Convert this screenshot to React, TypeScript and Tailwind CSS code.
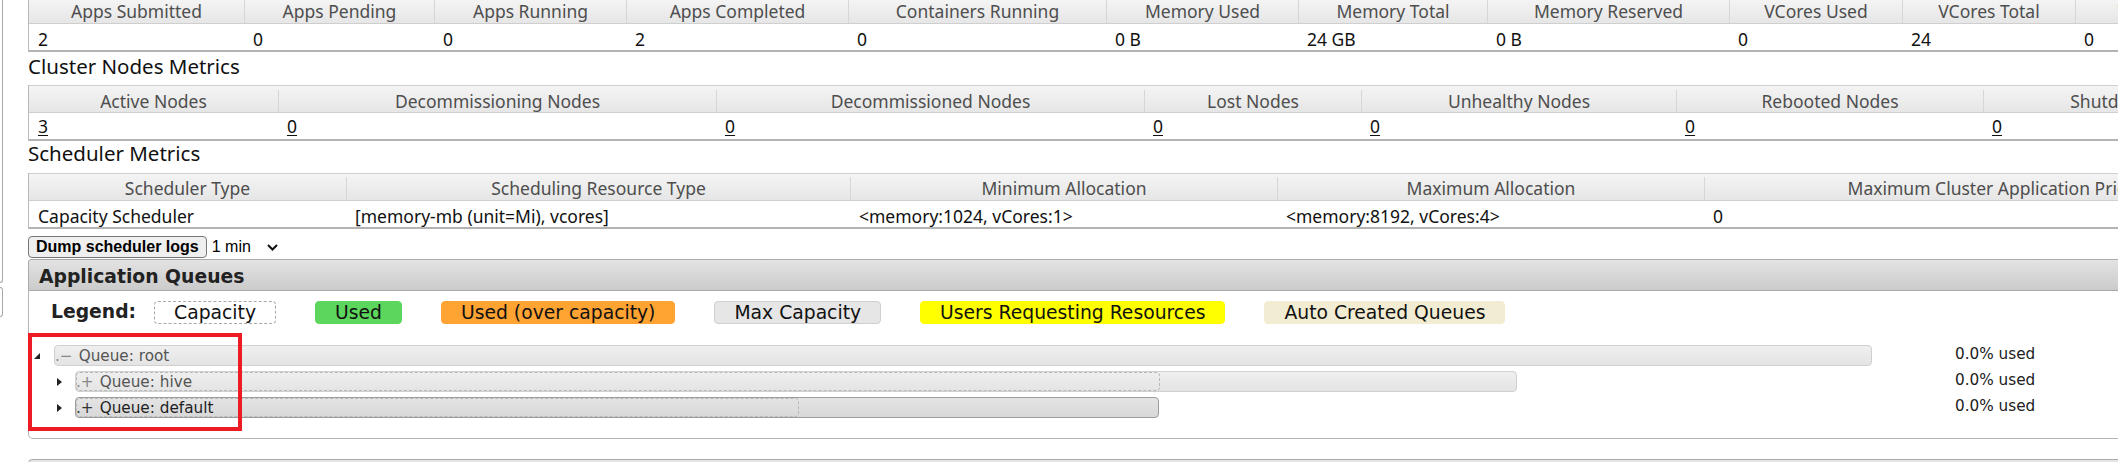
import React from "react";

const NOTO = "font-['Noto_Sans',sans-serif]";
const DEJA = "font-['DejaVu_Sans',Verdana,sans-serif]";

interface TableProps {
  grid: string;
  heads: string[];
  cells: string[];
  links?: boolean;
  headCls: string;
  rowCls: string;
}

const MetricsTable = ({ grid, heads, cells, links, headCls, rowCls }: TableProps) => {
  return (
    <div className={`shrink-0 flex flex-col border-l border-[#b9b9b9] text-[17.5px] ${NOTO}`}>
      <div className={`grid ${grid} ${headCls} bg-linear-to-b from-[#f4f4f4] to-[#e6e6e6] border-b border-[#cfcfcf]`}>
        {heads.map((h, i) => (
          <div
            key={h}
            className={`text-center text-[#4e4e4e] leading-[23px] whitespace-nowrap ${i > 0 ? "border-l border-[#d6d6d6]" : ""}`}
          >
            {h}
          </div>
        ))}
      </div>
      <div className={`grid ${grid} ${rowCls} bg-white border-b-2 border-[#b3b3b3]`}>
        {cells.map((c, i) => (
          <div key={i} className="pl-[9px] text-[#111] leading-[23px] whitespace-nowrap">
            {links ? <span className="underline underline-offset-2">{c}</span> : c}
          </div>
        ))}
      </div>
    </div>
  );
};

const Bar = ({ width, cap, hover, icon, label }: { width: string; cap?: string; hover?: boolean; icon: string; label: string }) => {
  return (
    <div
      className={`relative ${width} h-[21px] rounded-[4px] border ${
        hover
          ? "border-[#9c9c9c] bg-linear-to-b from-[#e4e4e4] to-[#d8d8d8] text-[#1e1e1e]"
          : "border-[#d0d0d0] bg-linear-to-b from-[#efefef] to-[#e4e4e4] text-[#555]"
      }`}
    >
      {cap && (
        <span className={`absolute left-0 top-0 bottom-0 ${cap} rounded-[4px] border border-dashed border-[#b8b8b8]`} />
      )}
      <div className={`relative flex pt-[1px] leading-[18px] text-[15.25px] whitespace-nowrap ${DEJA}`}>
        <span className={hover ? "text-[#333]" : "text-[#888]"}>.</span>
        <span className={hover ? "text-[#333]" : "text-[#888]"}>{icon}</span>
        <span className="ml-[6px]">{label}</span>
      </div>
    </div>
  );
};

const Used = () => (
  <span className={`self-start leading-[18px] text-[15.25px] text-[#222] whitespace-nowrap ${DEJA}`}>0.0% used</span>
);

export default function App() {
  const legend = [
    { t: "Capacity", c: "bg-white border-dashed border-[#a9a9a9]" },
    { t: "Used", c: "bg-[#5cd65c] border-[#5cd65c]" },
    { t: "Used (over capacity)", c: "bg-[#ffa333] border-[#ffa333]" },
    { t: "Max Capacity", c: "bg-[#e6e6e6] border-[#d0d0d0]" },
    { t: "Users Requesting Resources", c: "bg-[#ffff00] border-[#ffff00]" },
    { t: "Auto Created Queues", c: "bg-[#f2edd2] border-[#f2edd2]" },
  ];

  return (
    <div className="relative w-[2118px] h-[462px] overflow-hidden bg-white flex items-start">
      {/* left nav edge */}
      <div className="w-[3px] shrink-0 flex flex-col">
        <div className="h-[283px] border-r border-b border-[#a8a8a8] rounded-br-[4px]" />
        <div className="mt-[4px] h-[30px] border-r border-y border-[#a8a8a8] rounded-r-[4px]" />
      </div>

      <div className="ml-[25px] w-[2268px] shrink-0 flex flex-col">
        <MetricsTable
          grid="grid-cols-[215px_190px_192px_222px_258px_192px_189px_242px_173px_173px_222px]"
          headCls="h-[24px]"
          rowCls="h-[28px] pt-[4px]"
          heads={[
            "Apps Submitted",
            "Apps Pending",
            "Apps Running",
            "Apps Completed",
            "Containers Running",
            "Memory Used",
            "Memory Total",
            "Memory Reserved",
            "VCores Used",
            "VCores Total",
            "VCores Reserved",
          ]}
          cells={["2", "0", "0", "2", "0", "0 B", "24 GB", "0 B", "0", "24", "0"]}
        />
        <div className={`shrink-0 h-[33px] leading-[28px] text-[20.5px] text-[#111] ${NOTO}`}>Cluster Nodes Metrics</div>
        <MetricsTable
          grid="grid-cols-[249px_438px_428px_217px_315px_307px_314px]"
          headCls="h-[28px] pt-[4px] border-t"
          rowCls="h-[28px] pt-[2px]"
          links
          heads={[
            "Active Nodes",
            "Decommissioning Nodes",
            "Decommissioned Nodes",
            "Lost Nodes",
            "Unhealthy Nodes",
            "Rebooted Nodes",
            "Shutdown Nodes",
          ]}
          cells={["3", "0", "0", "0", "0", "0", "0"]}
        />
        <div className={`shrink-0 h-[32px] leading-[24px] text-[20.5px] text-[#111] ${NOTO}`}>Scheduler Metrics</div>
        <MetricsTable
          grid="grid-cols-[317px_504px_427px_427px_593px]"
          headCls="h-[28px] pt-[3px] border-t"
          rowCls="h-[28px] pt-[4px]"
          heads={[
            "Scheduler Type",
            "Scheduling Resource Type",
            "Minimum Allocation",
            "Maximum Allocation",
            "Maximum Cluster Application Priority",
          ]}
          cells={["Capacity Scheduler", "[memory-mb (unit=Mi), vcores]", "<memory:1024, vCores:1>", "<memory:8192, vCores:4>", "0"]}
        />

        {/* dump logs */}
        <div className="shrink-0 mt-[7px] flex items-center h-[22px] font-['Liberation_Sans',Arial,sans-serif] text-[16px] text-black">
          <button className="h-[22px] px-[7px] rounded-[4px] border border-[#767676] bg-[#efefef] font-bold leading-[20px]">
            Dump scheduler logs
          </button>
          <span className="ml-[5px]">1 min</span>
          <svg className="ml-[16px]" width="11" height="7" viewBox="0 0 11 7">
            <polyline points="1,1 5.5,5.5 10,1" fill="none" stroke="#111" strokeWidth="2" />
          </svg>
        </div>

        {/* application queues panel */}
        <div className="shrink-0 mt-[1px] flex flex-col">
          <div
            className={`h-[32px] border border-[#aaa] rounded-tl-[3px] bg-linear-to-b from-[#e3e3e3] to-[#cbcbcb] pl-[10px] pt-[6px] leading-[22px] text-[18.75px] font-bold text-[#222] ${DEJA}`}
          >
            Application Queues
          </div>
          <div className="border-x border-b border-[#b4b4b4] rounded-b-[5px] pt-[10px] pb-[20px]">
            <div className={`flex items-center h-[23px] pl-[22px] text-[18.75px] text-[#111] ${DEJA}`}>
              <span className="font-bold text-[#222]">Legend:</span>
              <div className="ml-[18px] flex gap-[39px]">
                {legend.map((l) => (
                  <span key={l.t} className={`h-[23px] px-[19px] rounded-[4px] border leading-[21px] whitespace-nowrap ${l.c}`}>
                    {l.t}
                  </span>
                ))}
              </div>
            </div>

            <div className="mt-[21px] flex flex-col gap-[5px]">
              <div className="flex h-[21px] items-center">
                <div className="w-[1926px] shrink-0 flex items-center">
                  <span className="ml-[5px] w-0 h-0 border-l-[6px] border-l-transparent border-b-[6px] border-b-[#222]" />
                  <div className="ml-[14px]">
                    <Bar width="w-[1818px]" icon={"\u2212"} label="Queue: root" />
                  </div>
                </div>
                <Used />
              </div>
              <div className="flex h-[21px] items-center">
                <div className="w-[1926px] shrink-0 flex items-center">
                  <span className="ml-[28px] w-0 h-0 border-l-[5px] border-l-[#222] border-y-[4px] border-y-transparent" />
                  <div className="ml-[13px]">
                    <Bar width="w-[1442px]" cap="w-[1084px]" icon="+" label="Queue: hive" />
                  </div>
                </div>
                <Used />
              </div>
              <div className="flex h-[21px] items-center">
                <div className="w-[1926px] shrink-0 flex items-center">
                  <span className="ml-[28px] w-0 h-0 border-l-[5px] border-l-[#222] border-y-[4px] border-y-transparent" />
                  <div className="ml-[13px]">
                    <Bar width="w-[1084px]" cap="w-[723px]" hover icon="+" label="Queue: default" />
                  </div>
                </div>
                <Used />
              </div>
            </div>
          </div>
        </div>

        {/* next collapsed panel */}
        <div className="mt-[20px] h-[32px] shrink-0 border border-[#aaa] rounded-tl-[4px] bg-linear-to-b from-[#e6e6e6] to-[#cfcfcf]" />
      </div>

      {/* annotation box */}
      <div className="absolute left-[28px] top-[333px] w-[214px] h-[98px] border-[4px] border-[#ed1c24]" />
    </div>
  );
}
